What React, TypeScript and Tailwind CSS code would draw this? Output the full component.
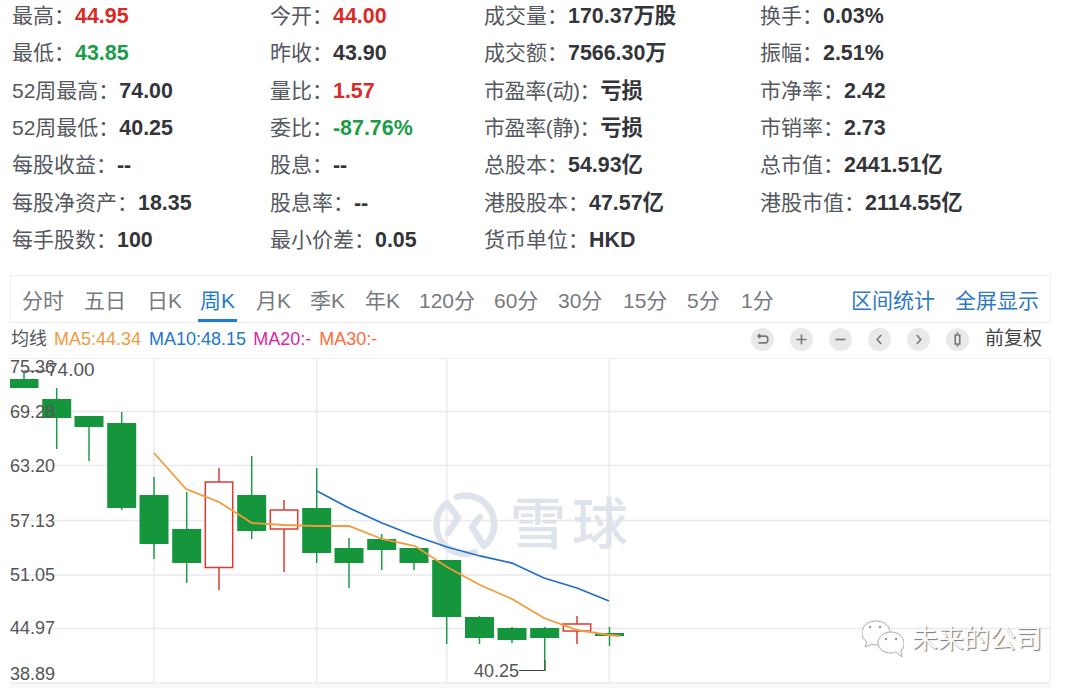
const stats: [string, string, string?][] = [
  ["最高:", "44.95", "text-[#d92b27]"],
  ["今开:", "44.00", "text-[#d92b27]"],
  ["成交量:", "170.37万股"],
  ["换手:", "0.03%"],
  ["最低:", "43.85", "text-[#1a9c48]"],
  ["昨收:", "43.90"],
  ["成交额:", "7566.30万"],
  ["振幅:", "2.51%"],
  ["52周最高:", "74.00"],
  ["量比:", "1.57", "text-[#d92b27]"],
  ["市盈率(动):", "亏损"],
  ["市净率:", "2.42"],
  ["52周最低:", "40.25"],
  ["委比:", "-87.76%", "text-[#1a9c48]"],
  ["市盈率(静):", "亏损"],
  ["市销率:", "2.73"],
  ["每股收益:", "--"],
  ["股息:", "--"],
  ["总股本:", "54.93亿"],
  ["总市值:", "2441.51亿"],
  ["每股净资产:", "18.35"],
  ["股息率:", "--"],
  ["港股股本:", "47.57亿"],
  ["港股市值:", "2114.55亿"],
  ["每手股数:", "100"],
  ["最小价差:", "0.05"],
  ["货币单位:", "HKD"],
]

const tabs = ["分时", "五日", "日K", "周K", "月K", "季K", "年K", "120分", "60分", "30分", "15分", "5分", "1分"]

// x, body top, body bottom, wick top, wick bottom, up
const candles: [number, number, number, number, number, boolean][] = [
  [24, 379, 388, 372, 388, false],
  [56.7, 399, 418, 388, 449, false],
  [89, 416, 427, 416, 461, false],
  [121.7, 423, 508, 412, 510, false],
  [154, 495, 544, 477, 559, false],
  [186.7, 529, 563, 492, 583, false],
  [219, 482, 567.5, 468, 590, true],
  [251.7, 495, 531, 456, 539, false],
  [284, 510, 529, 500, 572, true],
  [316.7, 508, 553, 468, 563, false],
  [349, 548, 563, 538, 588, false],
  [381.7, 539, 550, 534, 570, false],
  [414, 548, 563, 548, 570, false],
  [446.7, 560, 617, 560, 644, false],
  [479.5, 617, 638, 616, 644, false],
  [512, 628, 640, 627, 643, false],
  [544.7, 628, 638, 627, 671, false],
  [577, 624, 631, 616, 644, true],
  [609.5, 633, 636, 627, 646, false],
]

const ma5 = "154,453 186,489 219,502 252,523 284,525 317,526 349,526 382,539 415,546 447,567 480,585 512,599 544,618 577,630 609,635 620,636"
const ma10 = "317,491 349,508 382,523 415,536 447,547 480,556 512,563 544,578 577,588 609,601"
const yLabels: [string, number][] = [["75.36", 373], ["69.28", 418], ["63.20", 472], ["57.13", 527], ["51.05", 581], ["44.97", 634], ["38.89", 680]]

function Chart() {
  return (
    <svg width="1041" height="326" viewBox="10 358 1041 326" className="block">
      <g stroke="#e9eaee" strokeWidth="1.5">
        {[358, 411.5, 465.5, 520.5, 575, 628.5, 683].map((y) => <line key={y} x1="10" x2="1051" y1={y} y2={y} />)}
        {[154, 316.7, 446.7, 609.3].map((x) => <line key={x} x1={x} x2={x} y1="358" y2="683" />)}
        <line x1="1050.5" x2="1050.5" y1="358" y2="683" stroke="#f0f0f2" />
      </g>
      <g fill="none" stroke="#dfe3ec" strokeWidth="6.5" strokeLinecap="round" strokeLinejoin="round">
        <path d="M448 533L458 518L447 503A28.5 28.5 0 0 0 436.5 525A28.5 28.5 0 0 0 475 552" />
        <path d="M457 497A28.5 28.5 0 0 1 484 546L472 527L480 517" />
      </g>
      <text x="510" y="544" fontSize="56" fontWeight="500" letterSpacing="6" fill="#dfe3ec">雪球</text>
      {candles.map(([x, t, b, wt, wb, up]) => (
        <g key={x}>
          <line x1={x} x2={x} y1={wt} y2={wb} stroke={up ? "#dc3a30" : "#1a9c48"} strokeWidth="1.5" />
          {up
            ? <rect x={x - 13.7} y={t} width="27.4" height={b - t} fill="#fff" stroke="#dc3a30" strokeWidth="1.5" />
            : <rect x={x - 14.5} y={t} width="29" height={b - t} fill="#16963c" />}
        </g>
      ))}
      <polyline points={ma10} fill="none" stroke="#2470c6" strokeWidth="1.8" />
      <polyline points={ma5} fill="none" stroke="#f39a3c" strokeWidth="1.8" />
      <g fontSize="18" fill="#555">
        {yLabels.map(([t, y]) => <text key={t} x="10" y={y}>{t}</text>)}
        <text x="47" y="376" fontSize="19">74.00</text>
        <text x="474" y="677">40.25</text>
      </g>
      <path d="M24 371H47M519 670.5H545V660" fill="none" stroke="#444" strokeWidth="1" />
    </svg>
  )
}

function ToolIcon({ children }: { children: React.ReactNode }) {
  return (
    <span className="flex h-[23px] w-[23px] items-center justify-center rounded-full bg-[#e9e9e9]">
      <svg width="17" height="17" viewBox="0 0 15 15" fill="none" stroke="#777" strokeWidth="1.4">{children}</svg>
    </span>
  )
}

export default function App() {
  return (
    <div className="relative h-[688px] w-[1080px] overflow-hidden bg-white font-['Liberation_Sans','Noto_Sans_CJK_SC',sans-serif]">
      <div className="grid grid-cols-[258px_214px_276px_1fr] gap-y-[7.33px] pl-[12px] pt-px text-[21px] leading-[30px] text-[#55585e]">
        {stats.map(([label, value, color]) => (
          <div key={label} className="whitespace-nowrap">
            <span className={label.includes("(") ? "tracking-[-0.4px]" : ""}>{label.replace(":", "：")}</span>
            <span className={`text-[21.4px] font-bold ${color ?? "text-[#33353a]"}`}>{value}</span>
          </div>
        ))}
      </div>

      <div className="ml-[10px] mt-[20px] flex h-[48px] w-[1041px] items-center justify-between border border-[#eeeeee] pl-[11px] pr-[11px] text-[21px] text-[#777a80]">
        <div className="grid h-full grid-cols-[62px_63px_53px_56px_54px_55px_54px_75px_64px_65px_64px_54px_auto]">
          {tabs.map((t) => (
            <span key={t} className={t === "周K" ? "-ml-[2px] flex w-fit items-center border-b-[3px] border-[#1f7bcb] px-[2px] pt-[6px] text-[#1f7bcb]" : "flex items-center pt-[3px]"}>{t}</span>
          ))}
        </div>
        <div className="flex gap-[20px] pt-[3px] text-[#2f78c4]">
          <span>区间统计</span>
          <span>全屏显示</span>
        </div>
      </div>

      <div className="ml-[11px] flex h-[35px] w-[1031px] items-center pb-[2px] text-[18px] text-[#55585e]">
        <span className="mr-[7px]">均线</span>
        <span className="mr-[8px] text-[#ef9a3e]">MA5:44.34</span>
        <span className="mr-[7px] text-[#2277cc]">MA10:48.15</span>
        <span className="mr-[8px] text-[#d926a9]">MA20:-</span>
        <span className="text-[#ff6a3a]">MA30:-</span>
        <div className="ml-auto flex items-center gap-[16px]">
          <ToolIcon><path d="M4 4.5H10C13 4.5 13 10.5 10 10.5H4M5.5 2.8L3.5 4.5L5.5 6.2" /></ToolIcon>
          <ToolIcon><path d="M7.5 3V12M3 7.5H12" /></ToolIcon>
          <ToolIcon><path d="M3 7.5H12" /></ToolIcon>
          <ToolIcon><path d="M9 3.5L5.5 7.5L9 11.5" /></ToolIcon>
          <ToolIcon><path d="M6 3.5L9.5 7.5L6 11.5" /></ToolIcon>
          <ToolIcon><path d="M5.5 3.5H9.5V11.5H5.5ZM7.5 1V3.5M7.5 11.5V14" /></ToolIcon>
          <span className="text-[19px] text-[#444]">前复权</span>
        </div>
      </div>

      <div className="ml-[10px]">
        <Chart />
      </div>
      <div className="ml-[10px] h-[4px] w-[1041px] bg-[#f8f8f8]" />

      <div className="absolute left-[862px] top-[620px] flex items-center">
        <svg width="42" height="38" viewBox="0 0 42 38" fill="#fff" stroke="#aaa" strokeWidth="1">
          <path d="M14 1C6 1 0 6 0 13C0 17 2 20 5 22L3 27L10 24C12 25 14 25 16 25C24 25 28 19 28 13C28 6 22 1 14 1Z" />
          <path d="M29 12C22 12 16 17 16 23C16 29 22 33 29 33C31 33 32 33 34 32L40 37L39 31C41 29 42 26 42 23C42 17 36 12 29 12Z" />
          <g fill="#999" stroke="none"><circle cx="8" cy="7" r="1.2" /><circle cx="18" cy="7" r="1.2" /><circle cx="24" cy="19" r="1.2" /><circle cx="34" cy="19" r="1.2" /></g>
        </svg>
        <span className="ml-[8px] text-[26px] leading-[38px] text-[#fafafa] [text-shadow:1px_1px_1px_#777]">未来的公司</span>
      </div>
    </div>
  )
}
